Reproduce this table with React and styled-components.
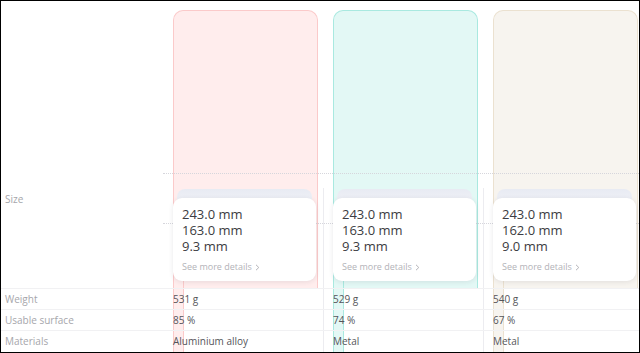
import React from 'react'
import styled, { createGlobalStyle } from 'styled-components'

const Global = createGlobalStyle`
  html, body { margin: 0; padding: 0; background: #fff; }
  * { box-sizing: border-box; }
`

const products = [
  { tint: '#ffeded', edge: '#fbcaca', size: ['243.0 mm', '163.0 mm', '9.3 mm'], weight: '531 g', surface: '85 %', material: 'Aluminium alloy' },
  { tint: '#e3f8f5', edge: '#a9e9e0', size: ['243.0 mm', '163.0 mm', '9.3 mm'], weight: '529 g', surface: '74 %', material: 'Metal' },
  { tint: '#f7f4ef', edge: '#ebe1d0', size: ['243.0 mm', '162.0 mm', '9.0 mm'], weight: '540 g', surface: '67 %', material: 'Metal' },
]

const Frame = styled.div`
  width: 640px;
  height: 353px;
  border: 1px solid #000;
  overflow: hidden;
  font-family: "Open Sans", "Liberation Sans", sans-serif;
`

const Table = styled.div`
  display: grid;
  grid-template-columns: 162px repeat(3, 160px);
  grid-template-rows: 172px 50px 65px 21px 21px 1fr;
  height: 100%;
`

const Tint = styled.div`
  grid-column: ${p => p.col};
  grid-row: 1 / 4;
  margin: 9px 5px 0 10px;
  background: ${p => p.bg};
  border: 1px solid ${p => p.edge};
  border-bottom: none;
  border-radius: 10px 10px 0 0;
`

const Strip = styled.div`
  grid-column: ${p => p.col};
  grid-row: 3 / -1;
  width: 11px;
  margin-left: 10px;
  background: ${p => p.bg};
  border-left: 1px solid ${p => p.edge};
  border-right: 1px solid ${p => p.edge};
`

const Dotted = styled.div`
  grid-column: 2 / -1;
  grid-row: ${p => p.row};
  border-top: 1px dotted #d6d6dc;
  height: 0;
`

const Divider = styled.div`
  grid-column: ${p => p.col};
  grid-row: 2 / -1;
  margin-top: 15px;
  width: 0;
  border-left: 1px solid #ececf0;
`

const RowLine = styled.div`
  grid-column: 1 / -1;
  grid-row: ${p => p.row};
  border-top: 1px solid #f1f1f3;
`

const Label = styled.div`
  grid-column: 1;
  grid-row: ${p => p.row};
  padding-left: 4px;
  font-size: 10px;
  line-height: 14px;
  color: #a6a6ab;
  display: flex;
  align-items: ${p => (p.top ? 'flex-start' : 'center')};
  padding-top: ${p => (p.top ? '19px' : '0')};
`

const Value = styled.div`
  grid-column: ${p => p.col};
  grid-row: ${p => p.row};
  padding-left: 10px;
  font-size: 10px;
  line-height: 14px;
  color: #55555a;
  display: flex;
  align-items: center;
  position: relative;
`

const SizeSlot = styled.div`
  grid-column: ${p => p.col};
  grid-row: 2 / 4;
  margin: 16px 7px 0 10px;
  display: flex;
  flex-direction: column;
`

const BackCard = styled.div`
  height: 14px;
  margin: 0 4px;
  border-radius: 8px 8px 0 0;
  background: linear-gradient(#e8ebf3, #f0f2f7);
`

const SizeCard = styled.div`
  position: relative;
  margin-top: -5px;
  height: 83px;
  background: #fff;
  border-radius: 9px;
  box-shadow: 0 1px 5px rgba(40, 40, 70, 0.1);
  padding: 8px 9px 0;
`

const Dims = styled.div`
  font-size: 13px;
  line-height: 16px;
  color: #3c3c42;
`

const More = styled.div`
  margin-top: 7px;
  font-size: 9px;
  line-height: 12px;
  color: #b3b3b8;
  display: flex;
  align-items: center;
  gap: 3px;
`

const Chevron = () => (
  <svg width="5" height="7" viewBox="0 0 5 7" fill="none">
    <path d="M1 0.8 L3.8 3.5 L1 6.2" stroke="#b3b3b8" strokeWidth="1" />
  </svg>
)

export default function App() {
  return (
    <>
      <Global />
      <Frame>
        <Table>
          {products.map((p, i) => (
            <Tint key={'t' + i} col={i + 2} bg={p.tint} edge={p.edge} />
          ))}
          {products.map((p, i) => (
            <Strip key={'s' + i} col={i + 2} bg={p.tint} edge={p.edge} />
          ))}
          <Dotted row={2} />
          <Dotted row={3} />
          <Divider col={3} />
          <Divider col={4} />
          <RowLine row={4} />
          <RowLine row={5} />
          <RowLine row={6} />

          <Label row="2 / 4" top>Size</Label>
          <Label row={4}>Weight</Label>
          <Label row={5}>Usable surface</Label>
          <Label row={6}>Materials</Label>

          {products.map((p, i) => (
            <SizeSlot key={'c' + i} col={i + 2}>
              <BackCard />
              <SizeCard>
                {p.size.map(s => (
                  <Dims key={s}>{s}</Dims>
                ))}
                <More>
                  See more details <Chevron />
                </More>
              </SizeCard>
            </SizeSlot>
          ))}
          {products.map((p, i) => (
            <React.Fragment key={'v' + i}>
              <Value col={i + 2} row={4}>{p.weight}</Value>
              <Value col={i + 2} row={5}>{p.surface}</Value>
              <Value col={i + 2} row={6}>{p.material}</Value>
            </React.Fragment>
          ))}
        </Table>
      </Frame>
    </>
  )
}
